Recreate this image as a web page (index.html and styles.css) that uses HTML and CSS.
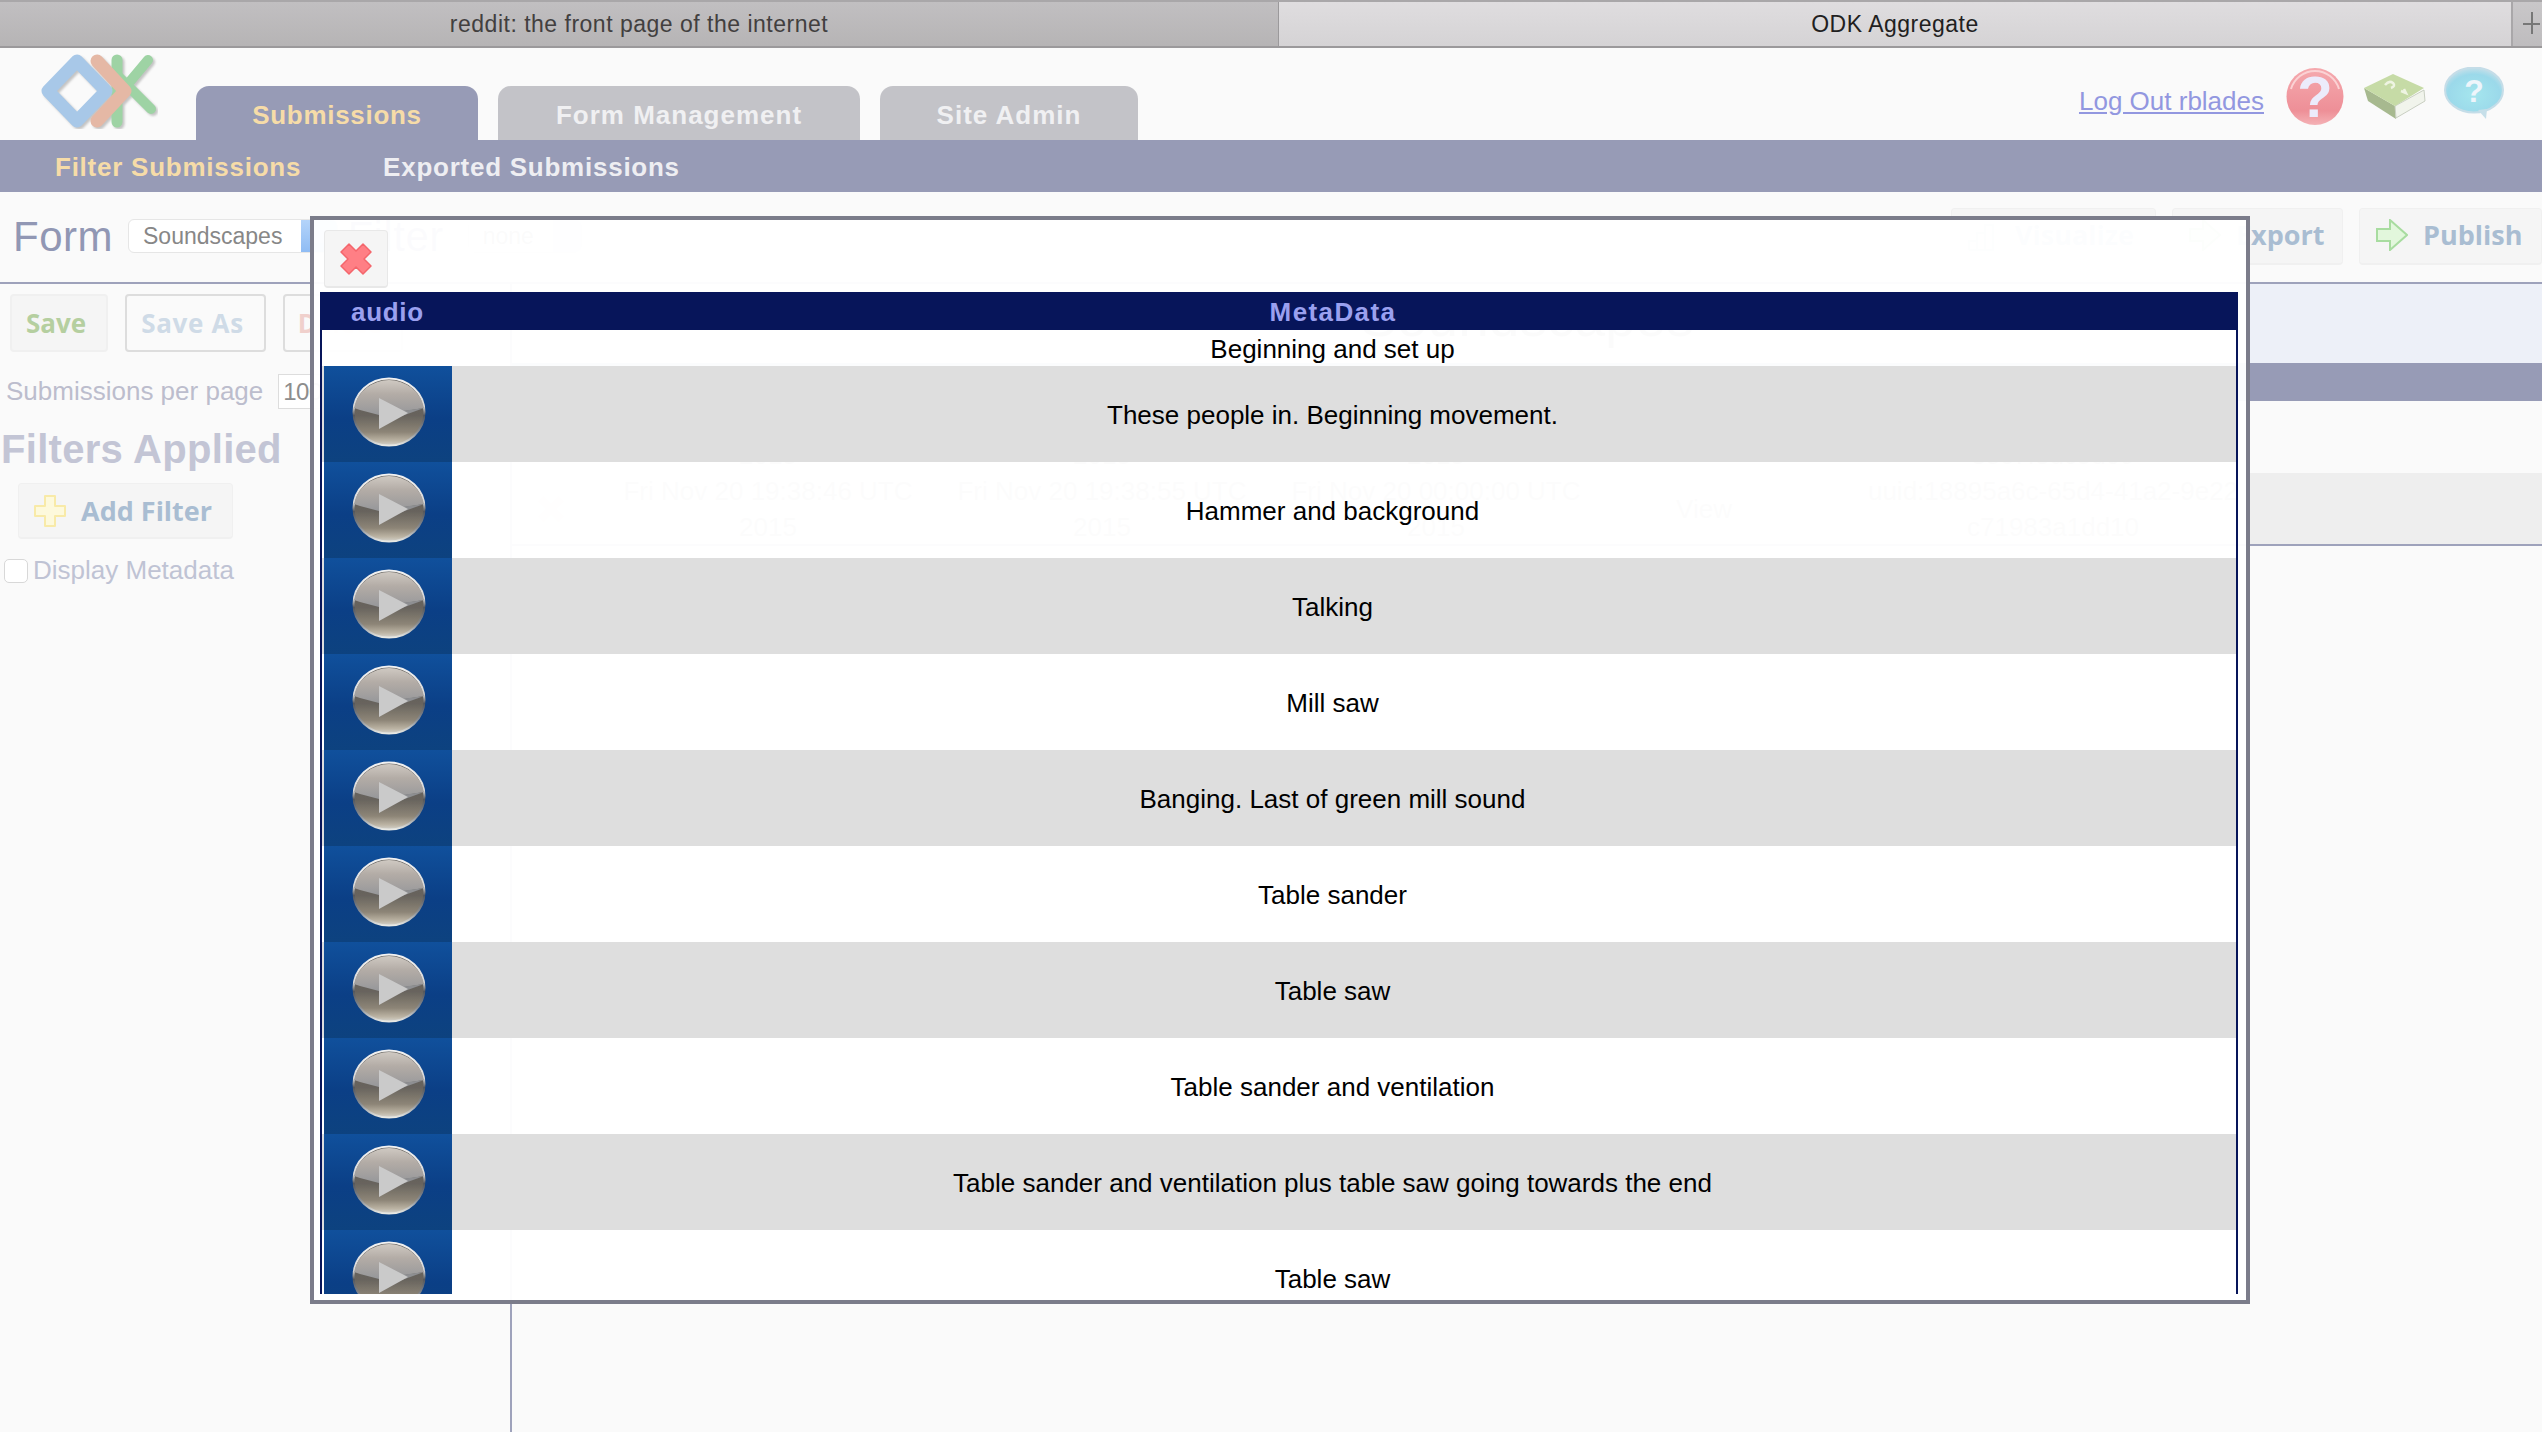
FILE: index.html
```html
<!DOCTYPE html>
<html lang="en">
<head>
<meta charset="utf-8">
<title>ODK Aggregate</title>
<link rel="stylesheet" href="styles.css">
</head>
<body>
<svg class="defs" aria-hidden="true">
  <defs>
    <linearGradient id="thumbBg" x1="0" y1="0" x2="0" y2="1">
      <stop offset="0" stop-color="#10509c"/><stop offset=".55" stop-color="#0b3f86"/><stop offset="1" stop-color="#0d427f"/>
    </linearGradient>
    <linearGradient id="ballTop" x1="0" y1="0" x2="0" y2="1">
      <stop offset="0" stop-color="#cfc9c2"/><stop offset=".4" stop-color="#b3aca6"/><stop offset="1" stop-color="#96979a"/>
    </linearGradient>
    <linearGradient id="ballBot" x1="0" y1="0" x2="0" y2="1">
      <stop offset="0" stop-color="#5f5c58"/><stop offset=".55" stop-color="#67635d"/><stop offset=".8" stop-color="#8d8577"/><stop offset=".93" stop-color="#bcb4a4"/><stop offset="1" stop-color="#d5d3cd"/>
    </linearGradient>
    <linearGradient id="ballRim" x1="0" y1="0" x2="0" y2="1">
      <stop offset="0" stop-color="#f2f2f2"/><stop offset=".42" stop-color="#d8d8d8"/><stop offset=".55" stop-color="#55575c"/><stop offset=".8" stop-color="#8a8f96"/><stop offset="1" stop-color="#e9e9e4"/>
    </linearGradient>
    <linearGradient id="redQ" x1="0" y1="0" x2="0" y2="1">
      <stop offset="0" stop-color="#f5a9ae"/><stop offset=".75" stop-color="#ee8f97"/><stop offset="1" stop-color="#f4b2b6"/>
    </linearGradient>
    <radialGradient id="blueQ" cx=".5" cy=".6" r=".6">
      <stop offset="0" stop-color="#a5e6ee"/><stop offset=".75" stop-color="#9bd9ea"/><stop offset="1" stop-color="#c6dfe9"/>
    </radialGradient>
    <filter id="soft" x="-10%" y="-10%" width="120%" height="120%"><feGaussianBlur stdDeviation=".7"/></filter>
    <symbol id="play" viewBox="0 0 128 96">
      <rect width="128" height="96" fill="url(#thumbBg)"/>
      <g filter="url(#soft)">
        <ellipse cx="65" cy="46" rx="35.500" ry="33.500" fill="url(#ballBot)" stroke="url(#ballRim)" stroke-width="2"/>
        <path d="M30 42 A35.500 33.500 0 0 1 100 42 L55 49 L36 44 Z" fill="url(#ballTop)"/>
        <path d="M100 42 L78 50 L55 48 Z" fill="#8e8f92"/>
        <path d="M55 32 L84 47 L55 63 Z" fill="#cacaca"/>
      </g>
    </symbol>
  </defs>
</svg>

<div class="page">
  <div class="tabstrip">
    <div class="btab btab-back">reddit: the front page of the internet</div>
    <div class="btab btab-front">ODK Aggregate</div>
    <div class="btab-new"><span class="plus-h"></span><span class="plus-v"></span></div>
  </div>

  <header class="header">
    <svg class="logo" viewBox="0 0 120 76" aria-label="ODK logo">
      <g class="logo-shapes" fill="none" stroke-linecap="round" stroke-linejoin="round">
        <path d="M79 22 L113 56" stroke="#9ed3a4" stroke-width="10"/>
        <path d="M79 44 L110 7" stroke="#9ed3a4" stroke-width="10"/>
        <path d="M79 7 V69" stroke="#9ed3a4" stroke-width="11"/>
        <path d="M39 8 L10 38 L39 68 L68 38 Z" stroke="#a8c8e8" stroke-width="13"/>
        <path d="M59 8 L87 38 L59 68" stroke="#e5b8a5" stroke-width="13"/>
      </g>
    </svg>
    <nav class="tabs">
      <a class="tab tab-active tab-sub">Submissions</a>
      <a class="tab tab-form">Form Management</a>
      <a class="tab tab-site">Site Admin</a>
    </nav>
    <div class="userbox">
      <a class="logout">Log Out rblades</a>
      <svg class="ic-red" viewBox="0 0 58 59">
        <circle cx="29" cy="29.500" r="28.500" fill="url(#redQ)"/>
        <path d="M5 22 A25 25 0 0 1 53 22" fill="none" stroke="#fbd2d4" stroke-width="2"/>
        <text x="29" y="50" class="q q-red">?</text>
      </svg>
      <svg class="ic-book" viewBox="0 0 63 47">
        <path d="M1 15 L32 33 L33 46 L5 28 Z" fill="#a7b98f"/>
        <path d="M32 33 L61 17 L62 28 L33 45 Z" fill="#f1f4ec" stroke="#c9cfc2" stroke-width="1"/>
        <path d="M1 15 L30 1 L61 15 L32 33 Z" fill="#c6dba6"/>
        <path d="M22 12 Q26 7 30 10 Q33 13 28 15 M38 18 L43 20 L41 16" fill="none" stroke="#eef4e2" stroke-width="2.500"/>
      </svg>
      <svg class="ic-bubble" viewBox="0 0 60 53">
        <ellipse cx="30" cy="23" rx="29" ry="22.500" fill="url(#blueQ)" stroke="#c5dde8" stroke-width="2"/>
        <path d="M34 43 L42 52 L43 42 Z" fill="#c6dfe9"/>
        <text x="30" y="35" class="q q-bubble">?</text>
      </svg>
    </div>
  </header>

  <div class="subnav">
    <a class="subnav-link subnav-active">Filter Submissions</a>
    <a class="subnav-link">Exported Submissions</a>
  </div>

  <div class="formbar">
    <div class="formbar-left">
      <span class="form-label">Form</span>
      <div class="select select-form"><span class="select-text">Soundscapes</span><span class="select-arrow"></span></div>
      <span class="form-label form-label-filter">Filter</span>
      <div class="select select-filter"><span class="select-text">none</span><span class="select-arrow"></span></div>
    </div>
    <div class="formbar-right">
      <button class="btn btn-vis">
        <svg class="btn-ic" viewBox="0 0 32 32"><path d="M1 31 V22 H9 V31 M9 31 V14 H17 V31 M17 31 V6 H25 V31 H1" fill="none" stroke="#c6d3e4" stroke-width="2"/></svg>
        Visualize
      </button>
      <button class="btn btn-exp">
        <svg class="btn-ic" viewBox="0 0 32 32"><path d="M1 10 H14 V1 L31 16 L14 31 V22 H1 Z" fill="#e2f7dc" stroke="#a8dca0" stroke-width="2"/></svg>
        Export
      </button>
      <button class="btn btn-pub">
        <svg class="btn-ic" viewBox="0 0 32 32"><path d="M1 10 H14 V1 L31 16 L14 31 V22 H1 Z" fill="#e2f7dc" stroke="#a8dca0" stroke-width="2"/></svg>
        Publish
      </button>
    </div>
  </div>

  <main class="content">
    <aside class="sidebar">
      <div class="toolbar">
        <button class="tbtn tbtn-save">Save</button>
        <button class="tbtn tbtn-saveas">Save As</button>
        <button class="tbtn tbtn-del">Delete</button>
      </div>
      <div class="perpage"><span>Submissions per page</span><span class="perpage-input">100</span></div>
      <h2 class="filters-title">Filters Applied</h2>
      <button class="btn btn-add">
        <svg class="btn-ic" viewBox="0 0 32 32"><path d="M11 1 H21 V11 H31 V21 H21 V31 H11 V21 H1 V11 H11 Z" fill="#fdf9dc" stroke="#f8eaa8" stroke-width="2" stroke-linejoin="round"/></svg>
        Add Filter
      </button>
      <label class="meta-check"><span class="checkbox"></span>Display Metadata</label>
    </aside>
    <section class="results">
      <div class="results-title"><span>Soundscapes</span></div>
      <div class="results-head"></div>
      <div class="results-row">
        <span class="cell cell-x"></span>
        <span class="cell cell-date">Fri Nov 20 19:38:10 UTC<br>2015</span>
        <span class="cell cell-date">Fri Nov 20 19:38:20 UTC<br>2015</span>
        <span class="cell cell-date">Fri Nov 20 00:00:00 UTC<br>2015</span>
        <span class="cell cell-view">View</span>
        <span class="cell cell-uuid">uuid:5d3c8f11-7a02-49ce-8f21<br>38c7f3dc5d09</span>
      </div>
      <div class="results-row results-row-alt">
        <span class="cell cell-x"><svg class="x-ghost" viewBox="0 0 32 32"><path d="M8 2 L16 10 L24 2 L30 8 L22 16 L30 24 L24 30 L16 22 L8 30 L2 24 L10 16 L2 8 Z" fill="#f8d9d0"/></svg></span>
        <span class="cell cell-date">Fri Nov 20 19:38:46 UTC<br>2015</span>
        <span class="cell cell-date">Fri Nov 20 19:38:55 UTC<br>2015</span>
        <span class="cell cell-date">Fri Nov 20 00:00:00 UTC<br>2015</span>
        <span class="cell cell-view">View</span>
        <span class="cell cell-uuid">uuid:18895a6c-65d4-41a2-9e22<br>c71983a1dd10</span>
      </div>
    </section>
  </main>
</div>

<div class="modal">
  <button class="modal-close" aria-label="Close">
    <svg viewBox="0 0 32 32"><path d="M9 1 L16 8 L23 1 L31 9 L24 16 L31 23 L23 31 L16 24 L9 31 L1 23 L8 16 L1 9 Z" fill="#ff7f85" stroke="#f4666c" stroke-width="1.500" stroke-linejoin="round"/></svg>
  </button>
  <div class="panel">
    <div class="panel-head">
      <span class="head-audio">audio</span>
      <span class="head-meta">MetaData</span>
    </div>
    <div class="panel-body">
      <div class="row row-first"><span class="row-thumb"></span><span class="row-text">Beginning and set up</span></div>
      <div class="row row-alt"><svg class="thumb"><use href="#play"/></svg><span class="row-text">These people in. Beginning movement.</span></div>
      <div class="row"><svg class="thumb"><use href="#play"/></svg><span class="row-text">Hammer and background</span></div>
      <div class="row row-alt"><svg class="thumb"><use href="#play"/></svg><span class="row-text">Talking</span></div>
      <div class="row"><svg class="thumb"><use href="#play"/></svg><span class="row-text">Mill saw</span></div>
      <div class="row row-alt"><svg class="thumb"><use href="#play"/></svg><span class="row-text">Banging. Last of green mill sound</span></div>
      <div class="row"><svg class="thumb"><use href="#play"/></svg><span class="row-text">Table sander</span></div>
      <div class="row row-alt"><svg class="thumb"><use href="#play"/></svg><span class="row-text">Table saw</span></div>
      <div class="row"><svg class="thumb"><use href="#play"/></svg><span class="row-text">Table sander and ventilation</span></div>
      <div class="row row-alt"><svg class="thumb"><use href="#play"/></svg><span class="row-text">Table sander and ventilation plus table saw going towards the end</span></div>
      <div class="row"><svg class="thumb"><use href="#play"/></svg><span class="row-text">Table saw</span></div>
    </div>
  </div>
</div>
</body>
</html>
```

FILE: styles.css
```css
* { box-sizing: border-box; }
html, body { margin: 0; height: 100%; }
body {
  background: #fafafa;
  font-family: "Liberation Sans", Arial, sans-serif;
  font-size: 26px;
  overflow: hidden;
}
.defs { position: absolute; width: 0; height: 0; }
.page { display: flex; flex-direction: column; height: 1432px; }

/* browser tab strip */
.tabstrip {
  display: flex;
  flex: 0 0 48px;
  border-top: 2px solid #a9a7a9;
  border-bottom: 2px solid #9b999b;
  font-size: 23px;
  letter-spacing: .5px;
}
.btab { display: flex; align-items: center; justify-content: center; }
.btab-back {
  flex: 0 0 1279px;
  background: linear-gradient(#c1bfc1, #b6b4b5);
  color: #423f3f;
  border-right: 1px solid #9b999b;
}
.btab-front {
  flex: 0 0 1232px;
  background: linear-gradient(#dfdddf, #d5d3d5);
  color: #221f1f;
}
.btab-new {
  position: relative;
  flex: 1;
  background: linear-gradient(#c9c7c9, #bebcbe);
  border-left: 2px solid #a9a7a9;
}
.plus-h { position: absolute; left: 10px; right: 2px; top: 21px; height: 2px; background: #777; }
.plus-v { position: absolute; left: 18px; top: 10px; width: 2px; height: 22px; background: #777; }

/* app header */
.header { display: flex; flex: 0 0 92px; align-items: flex-end; padding-left: 38px; background: #fafafa; }
.logo { flex: 0 0 120px; width: 120px; height: 76px; align-self: flex-start; margin-top: 5px; }
.logo-shapes { filter: drop-shadow(2px 2px 1px #c4c4c4); }
.tabs { display: flex; gap: 20px; margin-left: 38px; }
.tab {
  display: flex;
  align-items: center;
  justify-content: center;
  height: 54px;
  padding-top: 4px;
  border-radius: 13px 13px 0 0;
  background: #c3c3c8;
  color: #f0f0f2;
  font-weight: 700;
  letter-spacing: 1px;
}
.tab-sub { width: 282px; letter-spacing: .7px; }
.tab-form { width: 362px; }
.tab-site { width: 258px; }
.tab-active { background: #979bb6; color: #f6dca8; }
.userbox { display: flex; align-self: stretch; align-items: flex-start; margin-left: auto; }
.logout { margin-top: 38px; margin-right: 22px; color: #9297e0; text-decoration: underline; }
.ic-red { width: 58px; height: 59px; margin-top: 19px; }
.ic-book { width: 63px; height: 47px; margin-top: 25px; margin-left: 19px; }
.ic-bubble { width: 60px; height: 53px; margin-top: 19px; margin-left: 18px; margin-right: 38px; }
.q { font-family: "Liberation Sans", sans-serif; font-weight: 700; text-anchor: middle; }
.q-red { font-size: 58px; fill: #ecebfb; }
.q-bubble { font-size: 32px; fill: #eef5fb; }

/* sub navigation */
.subnav {
  display: flex;
  flex: 0 0 52px;
  gap: 82px;
  align-items: center;
  padding: 2px 0 0 55px;
  background: #979bb6;
  color: #eeeef2;
  font-weight: 700;
  letter-spacing: .75px;
}
.subnav-active { color: #f6dca8; }

/* form bar */
.formbar {
  display: flex;
  flex: 0 0 92px;
  justify-content: space-between;
  border-bottom: 2px solid #9ea2bb;
}
.formbar-left { display: flex; align-items: flex-start; padding: 27px 0 0 13px; }
.form-label { margin-top: -2px; color: #9197b4; font-size: 42px; line-height: 40px; letter-spacing: .5px; }
.form-label-filter { margin-left: 9px; }
.select {
  display: flex;
  height: 34px;
  overflow: hidden;
  margin-left: 15px;
  border: 1px solid #e6e6e6;
  border-radius: 6px;
  background: #fff;
  color: #878787;
  font-size: 23px;
  line-height: 32px;
}
.select-text { padding: 0 19px 0 14px; }
.select-arrow { width: 36px; background: linear-gradient(#b4d4fa, #8fbcf4); }
.select-filter { margin-left: 24px; }
.select-filter .select-arrow { width: 28px; background: #cfe0f8; }
.formbar-right { display: flex; gap: 16px; align-items: flex-start; padding-top: 16px; }

.btn {
  display: flex;
  align-items: center;
  height: 57px;
  padding: 0 16px;
  border: 1px solid #f0f0f0;
  border-bottom-width: 2px;
  border-radius: 4px;
  background: #f5f5f5;
  color: #a9bdd2;
  font: 700 27px "Open Sans", sans-serif;
}
.formbar-right .btn { padding-bottom: 3px; }
.btn-ic { flex: 0 0 32px; width: 32px; height: 32px; margin-right: 15px; }
.btn-vis { width: 205px; }
.btn-exp { width: 171px; }
.btn-pub { width: 183px; }

/* main area */
.content { display: flex; flex: 1; min-height: 0; }
.sidebar { flex: 0 0 512px; border-right: 2px solid #9ea2bb; }
.toolbar { display: flex; gap: 17px; padding: 10px 0 0 10px; }
.tbtn {
  height: 58px;
  padding: 0 6px 0 0;
  border: 2px solid #ddd;
  border-radius: 4px;
  background: #fafafa;
  font: 700 26px "Open Sans", sans-serif;
}
.tbtn-save { width: 98px; background: #f5f5f5; border-color: #f0f0f0; color: #b5cfa0; }
.tbtn-saveas { width: 141px; color: #cfdbe7; letter-spacing: .7px; }
.tbtn-del { width: 120px; color: #f0d0cc; }
.perpage { display: flex; align-items: center; gap: 15px; margin-top: 22px; padding-left: 6px; color: #bcbdcd; }
.perpage-input { flex: 0 0 120px; height: 35px; padding-left: 4px; border: 1px solid #ddd; background: #fff; color: #8d8d8d; font-size: 24px; line-height: 33px; letter-spacing: -.5px; }
.filters-title { margin: 17px 0 0 1px; color: #c3c5d5; font-size: 40px; line-height: 46px; font-weight: 700; letter-spacing: .3px; }
.btn-add { width: 215px; height: 56px; margin: 11px 0 0 18px; padding-left: 15px; }
.meta-check { display: flex; align-items: center; margin: 16px 0 0 4px; color: #bfc3d4; }
.checkbox { flex: 0 0 24px; height: 24px; margin-right: 5px; border: 1px solid #d8d8d8; border-radius: 5px; background: #fff; }

.results { flex: 1; min-width: 0; }
.results-title { display: flex; justify-content: center; height: 79px; background: #edf0f8; color: #8d8f96; font-size: 55px; line-height: 66px; }
.results-head { height: 38px; background: #979bb6; }
.results-row { display: flex; align-items: center; height: 72px; color: #aaa; line-height: 36px; text-align: center; }
.results-row-alt { background: #eee; border-bottom: 2px solid #9ea2bb; height: 73px; }
.cell { flex: none; }
.cell-x { width: 89px; padding-left: 24px; }
.x-ghost { width: 30px; height: 30px; display: block; }
.cell-date { width: 334px; }
.cell-view { width: 202px; }
.cell-uuid { width: 380px; margin-left: 58px; }

/* metadata dialog */
.modal {
  position: absolute;
  left: 310px;
  top: 216px;
  width: 1940px;
  height: 1088px;
  padding-top: 10px;
  border: 4px solid #7b7c8a;
  background: rgba(255, 255, 255, .965);
}
.modal-close {
  display: flex;
  align-items: center;
  justify-content: center;
  width: 64px;
  height: 58px;
  margin-left: 10px;
  padding: 0;
  border: 1px solid #e8e8e8;
  border-bottom-width: 2px;
  border-radius: 4px;
  background: #f5f5f5;
}
.modal-close svg { width: 32px; height: 32px; }
.panel { display: flex; flex-direction: column; width: 1918px; height: 1002px; margin: 4px 0 0 6px; }
.panel-head {
  display: flex;
  flex: 0 0 38px;
  align-items: center;
  padding-top: 2px;
  background: #07155a;
  color: #9aa0ef;
  font-weight: 700;
  font-size: 26px;
  letter-spacing: .7px;
}
.head-audio { flex: 0 0 134px; padding-left: 31px; }
.head-meta { flex: 1; padding-right: 26px; text-align: center; letter-spacing: 1.4px; }
.panel-body { flex: 1; min-height: 0; overflow: hidden; border: solid #07155a; border-width: 0 2px; }
.row { display: flex; align-items: center; height: 96px; padding-left: 2px; color: #000; }
.row-first { height: 36px; }
.row-alt { background: #dedede; }
.thumb { flex: 0 0 128px; display: block; width: 128px; height: 96px; }
.row-thumb { flex: 0 0 128px; }
.row-text { flex: 1; padding: 2px 23px 0 0; text-align: center; }
```
